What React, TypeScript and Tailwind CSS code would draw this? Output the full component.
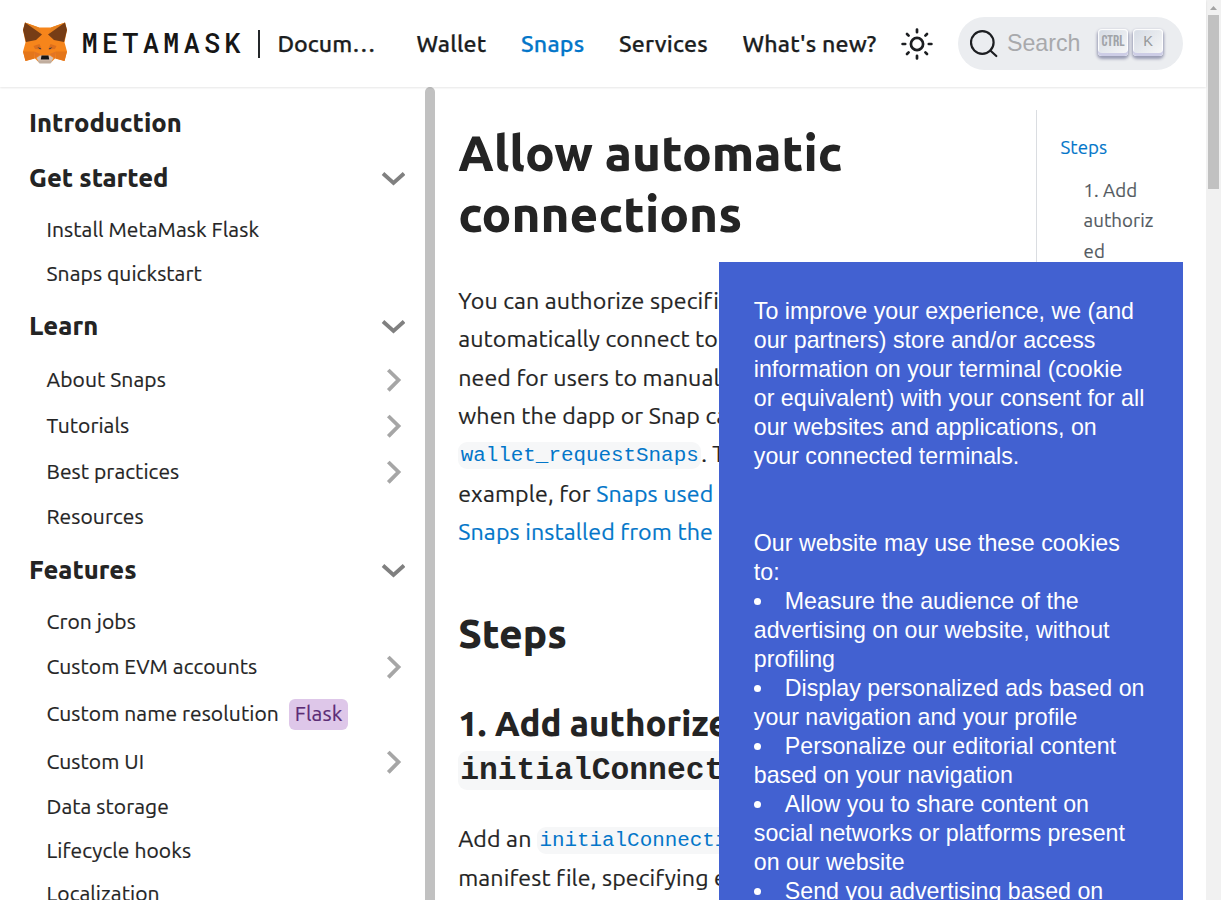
import React from "react";

type Item = {
  label: string;
  kind: "top" | "sub";
  gap: string;
  arrow?: boolean;
  tag?: string;
};

const items: Item[] = [
  { label: "Introduction", kind: "top", gap: "mt-3" },
  { label: "Get started", kind: "top", gap: "mt-[7px]", arrow: true },
  { label: "Install MetaMask Flask", kind: "sub", gap: "mt-1.5" },
  { label: "Snaps quickstart", kind: "sub", gap: "mt-0" },
  { label: "Learn", kind: "top", gap: "mt-1.5", arrow: true },
  { label: "About Snaps", kind: "sub", gap: "mt-2", arrow: true },
  { label: "Tutorials", kind: "sub", gap: "mt-0.5", arrow: true },
  { label: "Best practices", kind: "sub", gap: "mt-0.5", arrow: true },
  { label: "Resources", kind: "sub", gap: "mt-px" },
  { label: "Features", kind: "top", gap: "mt-[7px]", arrow: true },
  { label: "Cron jobs", kind: "sub", gap: "mt-1.5" },
  { label: "Custom EVM accounts", kind: "sub", gap: "mt-px", arrow: true },
  { label: "Custom name resolution", kind: "sub", gap: "mt-[3px]", tag: "Flask" },
  { label: "Custom UI", kind: "sub", gap: "mt-1", arrow: true },
  { label: "Data storage", kind: "sub", gap: "mt-px" },
  { label: "Lifecycle hooks", kind: "sub", gap: "mt-0" },
  { label: "Localization", kind: "sub", gap: "-mt-px" },
];

function Fox() {
  return (
    <svg className="mb-px h-[42px] w-[46px] shrink-0" viewBox="0 0 46 42">
      <path fill="#f6851b" d="M3 0.5 17 5.5H29L43 .5 45 8 42.5 20.5 45 29.5 42.5 39 33 36.5 29 40.5H17L13 36.5 3.5 39 1 29.5 3.5 20.500 1 8Z" />
      <path fill="#e8821e" d="M3 .5 19.500 12.500 17 5.500ZM43 .5 26.500 12.500 29 5.500Z" />
      <path fill="#763d16" d="M3 .5 20 12.500 14 18 4 20 1 8ZM43 .5 26 12.500 32 18 42 20 45 8Z" />
      <path fill="#e4761b" d="M1 29.500H12V36.500L3.500 39ZM45 29.500H34V36.500L42.500 39Z" />
      <path fill="#e27525" d="M12 29.500 18.500 32 13 36.500ZM34 29.500 27.500 32 33 36.500Z" />
      <path fill="#dd6f1c" d="M11.500 24 17.500 22 20 27.500 13 27ZM34.500 24 28.500 22 26 27.500 33 27Z" />
      <path fill="#233447" d="M15.500 25.300 19 26.300 18.300 27.500ZM30.500 25.300 27 26.300 27.700 27.500Z" />
      <path fill="#d7c1b3" d="M14.500 36 18 33.500H28L31.500 36 29 40H17Z" />
      <path fill="#c0ad9e" d="M15.500 38.500H30.500L28.500 41.500H17.500Z" />
      <path fill="#161616" d="M19.500 33.500H26.500L27.200 37.500H18.800Z" />
    </svg>
  );
}

function Sun() {
  return (
    <svg className="size-[34px]" viewBox="0 0 34 34" fill="none" stroke="#1c1e21" strokeLinecap="round">
      <circle cx="17" cy="17" r="6.100" strokeWidth="2.700" />
      <path strokeWidth="2.700" d="M17 2.600V5.200M17 28.800V31.400M2.600 17H5.200M28.800 17H31.400M7 7 8.600 8.600M25.400 25.400 27 27M7 27 8.600 25.400M25.400 8.600 27 7" />
    </svg>
  );
}

function Chevron({ down }: { down: boolean }) {
  return (
    <svg className={down ? "h-6 w-6 text-[#808080]" : "h-6 w-6 text-[#a6a6a6]"} viewBox="0 0 24 24" fill="none" stroke="currentColor" strokeWidth="3.800">
      <path d={down ? "M2 7.500 12.500 17 23 7.500" : "M7.300 2 17.500 12 7.300 22.300"} />
    </svg>
  );
}

function Key({ children }: { children: React.ReactNode }) {
  return (
    <span className="flex h-[27px] w-[30px] items-center justify-center rounded-[4px] bg-linear-[-225deg,#d5dbe4,#f8f8f8] pb-0.5 shadow-[inset_0_-3px_0_0_#cdcde6,inset_0_0_1px_1px_#fff,0_2px_3px_1px_rgba(30,35,90,0.4)]">
      {children}
    </span>
  );
}

function Code({ children }: { children: React.ReactNode }) {
  return (
    <code className="rounded-[9px] bg-[#f6f7f8] px-[2.500px] py-[2px] align-[1px] font-['Liberation_Mono',monospace] text-[20.880px] font-normal leading-none tracking-normal text-[#0376c9] [-webkit-text-stroke:0]">
      {children}
    </code>
  );
}

function Bullet() {
  return <span className="mr-6 inline-block size-[7px] rounded-full bg-white align-[4px]" />;
}

export default function App() {
  return (
    <div className="relative flex h-[900px] w-[1221px] overflow-hidden bg-white font-['Ubuntu','Noto_Sans',sans-serif] text-[#242424]">
      <div className="flex w-[1206px] shrink-0 flex-col">
        <header className="z-10 flex h-[87px] shrink-0 items-center bg-white pl-[22px] text-[23.200px] font-medium text-[#1c1e21] shadow-[0_1px_2px_0_rgba(0,0,0,0.1)]">
          <Fox />
          <span className="ml-[13.500px] w-[175px] whitespace-nowrap font-['Roboto_Mono','Liberation_Mono',monospace] text-[27px] tracking-[4.200px] text-[#161616]">METAMASK</span>
          <span className="ml-px mt-px h-7 w-0.5 bg-[#24272a]" />
          <span className="ml-[18px] w-[104px] pb-px [-webkit-text-stroke:0.25px]">Docum…</span>
          <nav className="ml-[35px] flex gap-[34.500px] whitespace-nowrap pb-px tracking-[0.200px] [-webkit-text-stroke:0.25px]">
            <a>Wallet</a>
            <a className="text-[#0376c9]">Snaps</a>
            <a>Services</a>
            <a>What's new?</a>
          </nav>
          <div className="ml-auto mr-[272px] shrink-0"><Sun /></div>
          <div className="absolute left-[958px] top-[17px] flex h-[53px] w-[225px] items-center rounded-full bg-[#ebedf0] pl-3 font-['Liberation_Sans',sans-serif] font-normal">
            <svg className="size-[28px] shrink-0" viewBox="0 0 28 28" fill="none" stroke="#1c1e21" strokeWidth="2.200" strokeLinecap="round">
              <circle cx="12.300" cy="12.500" r="11.300" />
              <path d="M20.300 20.500 26.300 26" />
            </svg>
            <span className="ml-[9px] text-[23.200px] text-[#a8a9ac]">Search</span>
            <div className="ml-[17.500px] flex gap-[5px] pb-[3px]">
              <Key><span className="pt-[2px] font-['Bebas_Neue','Roboto_Condensed',sans-serif] text-[15.500px] leading-none text-[#a0a3a8]">CTRL</span></Key>
              <Key><span className="text-[14.500px] leading-none text-[#969899]">K</span></Key>
            </div>
          </div>
        </header>

        <div className="flex min-h-0 flex-1">
          <aside className="flex w-[435px] shrink-0 overflow-hidden">
            <ul className="flex w-[425px] flex-col">
              {items.map((it) => (
                <li
                  key={it.label}
                  className={`${it.gap} flex shrink-0 items-center pr-5 ${
                    it.kind === "top"
                      ? "h-12 pl-[29px] text-[25.520px] font-extrabold"
                      : "h-11 pl-[46.500px] text-[21px] tracking-[0.080px] [-webkit-text-stroke:0.2px]"
                  }`}
                >
                  <span>{it.label}</span>
                  {it.tag && (
                    <span className="ml-[10px] flex h-[31px] items-center rounded-[6px] bg-[#dec7e9] px-1.5 text-[#5b2c75]">{it.tag}</span>
                  )}
                  {it.arrow && (
                    <span className="ml-auto">
                      <Chevron down={it.kind === "top"} />
                    </span>
                  )}
                </li>
              ))}
            </ul>
            <div className="w-2.5 rounded-t-[5px] bg-[#c1c1c1]" />
          </aside>

          <main className="flex min-w-0 flex-1">
            <article className="w-[601px] shrink-0 overflow-hidden whitespace-nowrap pl-[23.200px] pt-[35px] text-[23.200px] leading-[38.300px]">
              <h1 className="text-[49.300px] font-extrabold leading-[61px]">Allow automatic<br />connections</h1>
              <p className="mt-[37.200px] tracking-[0.110px] [-webkit-text-stroke:0.2px]">
                You can authorize specific dapps and Snaps to<br />
                automatically connect to your Snap without the<br />
                need for users to manually confirm a<br />
                when the dapp or Snap calls
              </p>
              <p className="h-[39.800px] [-webkit-text-stroke:0.2px]"><Code>wallet_requestSnaps</Code>. This is</p>
              <p className="tracking-[0.130px] [-webkit-text-stroke:0.2px]">
                example, for <a className="text-[#0376c9]">Snaps used by</a><br />
                <a className="text-[#0376c9]">Snaps installed from the npm</a>
              </p>
              <h2 className="mt-[57px] text-[40.600px] font-extrabold leading-[51px]">Steps</h2>
              <h3 className="mt-[43px] text-[34.800px] font-extrabold leading-[43.500px]">
                1. Add authorized<br />
                <code className="rounded-[9px] bg-[#f6f7f8] px-[2px] py-[2px] font-['Liberation_Mono',monospace] text-[31.320px] font-bold">initialConnections</code>
              </h3>
              <p className="mt-[26px] h-[39px] tracking-[0.110px] [-webkit-text-stroke:0.2px]">Add an <Code>initialConnections</Code></p>
              <p className="tracking-[0.110px] [-webkit-text-stroke:0.2px]">manifest file, specifying each</p>
            </article>
            <aside className="mt-[23px] w-[170px] border-l border-[#dadde1] pl-[23.500px] pt-[23px] text-[18.700px] leading-[30.500px] tracking-[0.060px] text-[#535a61] [-webkit-text-stroke:0.15px]">
              <a className="block text-[#0376c9]">Steps</a>
              <a className="mt-3 block pl-[23px]">1. Add<br />authoriz<br />ed</a>
            </aside>
          </main>
        </div>
      </div>

      <div className="flex w-[15px] shrink-0 flex-col items-center bg-[#f1f1f1]">
        <svg className="h-[15px] w-[15px]" viewBox="0 0 15 15"><path fill="#a3a3a3" d="M4 10 7.500 6 11 10Z" /></svg>
        <div className="h-[174px] w-[11px] bg-[#c1c1c1]" />
      </div>

      <div className="absolute left-[719px] top-[262px] z-20 h-[638px] w-[464px] overflow-hidden bg-[#4261d1] pl-[34.800px] pr-[36px] pt-[35px] font-['Liberation_Sans',sans-serif] text-[23.200px] font-normal leading-[29px] text-white">
        <p>To improve your experience, we (and our partners) store and/or access information on your terminal (cookie or equivalent) with your consent for all our websites and applications, on your connected terminals.</p>
        <p className="mt-[58px]">Our website may use these cookies to:</p>
        <p><Bullet />Measure the audience of the advertising on our website, without profiling</p>
        <p><Bullet />Display personalized ads based on your navigation and your profile</p>
        <p><Bullet />Personalize our editorial content based on your navigation</p>
        <p><Bullet />Allow you to share content on social networks or platforms present on our website</p>
        <p><Bullet />Send you advertising based on</p>
      </div>
    </div>
  );
}
